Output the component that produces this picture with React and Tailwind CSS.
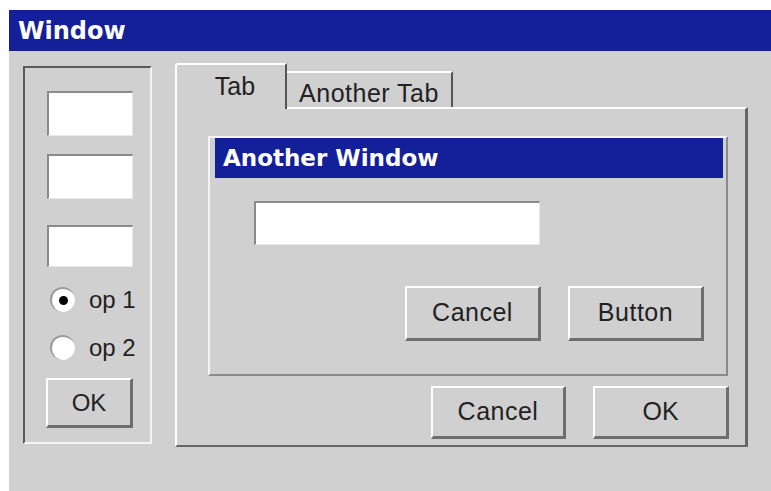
import React from "react";

const sans = "font-['Liberation_Sans',Arial,sans-serif]";
const bold = "font-['DejaVu_Sans',Verdana,sans-serif] font-bold";

function Raised({ className = "", children }) {
  return (
    <div
      className={`flex items-center justify-center bg-[#d0d0d0] border-t-2 border-l-2 border-b-[3px] border-r-[3px] border-t-white border-l-white border-b-[#6e6e6e] border-r-[#6e6e6e] text-[#222] ${sans} ${className}`}
    >
      {children}
    </div>
  );
}

function Field({ className = "" }) {
  return (
    <div
      className={`bg-white border-t-2 border-l-2 border-b border-r border-t-[#8a8a8a] border-l-[#8a8a8a] border-b-[#e8e8e8] border-r-[#e8e8e8] ${className}`}
    />
  );
}

function Radio({ checked, label, className = "" }) {
  return (
    <div className={`flex items-center ${className}`}>
      <div className="w-[25px] h-[25px] rounded-full bg-white border-t-2 border-l-2 border-t-[#9a9a9a] border-l-[#9a9a9a] flex items-center justify-center ml-[3px]">
        {checked && <div className="w-[9px] h-[9px] rounded-full bg-black" />}
      </div>
      <span className={`ml-[14px] text-[24px] leading-none text-[#222] ${sans}`}>{label}</span>
    </div>
  );
}

export default function App() {
  return (
    <div className="w-[771px] h-[491px] bg-white pt-[10px] pl-[9px] overflow-hidden flex">
      <div className="flex-1 flex flex-col bg-[#d0d0d0]">
        {/* main title bar */}
        <div className={`h-[41px] bg-[#14209a] flex items-center pl-[9px] text-white text-[24px] leading-none ${bold}`}>
          Window
        </div>

        <div className="flex items-start pt-[12px] pl-[14px]">
          {/* left group box */}
          <div className="mt-[3px] w-[129px] h-[378px] border-2 border-t-[#5a5a5a] border-l-[#5a5a5a] border-b-[#f4f4f4] border-r-[#f4f4f4] flex flex-col pt-[23px] pl-[22px]">
            <Field className="w-[86px] h-[45px]" />
            <Field className="w-[86px] h-[45px] mt-[18px]" />
            <Field className="w-[86px] h-[42px] mt-[26px]" />
            <Radio checked label="op 1" className="mt-[20px]" />
            <Radio label="op 2" className="mt-[23px]" />
            <Raised className="w-[87px] h-[50px] -ml-[1px] mt-[18px] text-[24px]">OK</Raised>
          </div>

          {/* tab control */}
          <div className="ml-[23px] w-[573px] flex flex-col">
            <div className="flex items-end h-[44px]">
              <div className={`relative z-10 w-[112px] h-[46px] -mb-[2px] bg-[#d0d0d0] border-t-2 border-l-2 border-r-2 border-t-white border-l-white border-r-[#555] rounded-tl-[3px] flex justify-center pt-[9px] pl-[8px] text-[25px] leading-none text-[#222] ${sans}`}>
                Tab
              </div>
              <div className={`w-[166px] h-[36px] bg-[#d0d0d0] border-t-2 border-r-2 border-t-white border-r-[#555] flex justify-center pt-[8px] text-[25px] tracking-[0.5px] leading-none text-[#222] ${sans}`}>
                Another Tab
              </div>
            </div>

            <div className="h-[340px] border-t-2 border-l-2 border-b-2 border-r-[3px] border-t-white border-l-white border-b-[#666] border-r-[#666] flex flex-col pt-[27px] pl-[31px]">
              {/* inner window */}
              <div className="w-[520px] h-[240px] border-t-2 border-l-2 border-b-2 border-r-2 border-t-[#f4f4f4] border-l-[#f4f4f4] border-b-[#8a8a8a] border-r-[#8a8a8a] flex flex-col">
                <div className={`h-[40px] ml-[5px] mr-[3px] bg-[#14209a] flex items-center pl-[8px] text-white text-[23px] leading-none ${bold}`}>
                  Another Window
                </div>
                <Field className="w-[286px] h-[44px] ml-[44px] mt-[23px]" />
                <div className="flex justify-end gap-[27px] pr-[22px] mt-[41px]">
                  <Raised className="w-[136px] h-[55px] text-[25px] tracking-[0.5px]">Cancel</Raised>
                  <Raised className="w-[136px] h-[55px] text-[25px] tracking-[0.5px]">Button</Raised>
                </div>
              </div>
              <div className="flex justify-end gap-[27px] pr-[16px] mt-[10px]">
                <Raised className="w-[135px] h-[53px] text-[25px] tracking-[0.5px]">Cancel</Raised>
                <Raised className="w-[136px] h-[53px] text-[25px]">OK</Raised>
              </div>
            </div>
          </div>
        </div>
      </div>
    </div>
  );
}
